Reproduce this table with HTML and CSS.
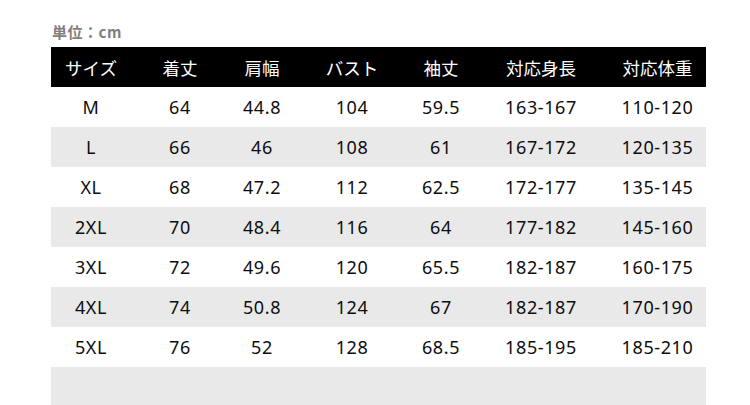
FILE: index.html
```html
<!DOCTYPE html>
<html lang="ja">
<head>
<meta charset="utf-8">
<link rel="stylesheet" href="styles.css">
</head>
<body>
<div class="page">
  <div class="unit">単位：cm</div>
  <div class="table">
    <div class="row head"><span>サイズ</span><span>着丈</span><span>肩幅</span><span>バスト</span><span>袖丈</span><span>対応身長</span><span>対応体重</span></div>
    <div class="row"><span>M</span><span>64</span><span>44.8</span><span>104</span><span>59.5</span><span>163-167</span><span>110-120</span></div>
    <div class="row alt"><span>L</span><span>66</span><span>46</span><span>108</span><span>61</span><span>167-172</span><span>120-135</span></div>
    <div class="row"><span>XL</span><span>68</span><span>47.2</span><span>112</span><span>62.5</span><span>172-177</span><span>135-145</span></div>
    <div class="row alt"><span>2XL</span><span>70</span><span>48.4</span><span>116</span><span>64</span><span>177-182</span><span>145-160</span></div>
    <div class="row"><span>3XL</span><span>72</span><span>49.6</span><span>120</span><span>65.5</span><span>182-187</span><span>160-175</span></div>
    <div class="row alt"><span>4XL</span><span>74</span><span>50.8</span><span>124</span><span>67</span><span>182-187</span><span>170-190</span></div>
    <div class="row"><span>5XL</span><span>76</span><span>52</span><span>128</span><span>68.5</span><span>185-195</span><span>185-210</span></div>
    <div class="row alt empty"></div>
  </div>
</div>
</body>
</html>
```
FILE: styles.css
```css
html, body {
  margin: 0;
  padding: 0;
  background: #ffffff;
}
.page {
  width: 750px;
  height: 405px;
  overflow: hidden;
  padding-left: 51px;
  box-sizing: border-box;
}
.unit {
  height: 47px;
  box-sizing: border-box;
  padding-top: 21px;
  padding-left: 1px;
  font-family: "Noto Sans CJK JP", "Noto Sans", sans-serif;
  font-weight: 700;
  font-size: 15px;
  line-height: 22px;
  letter-spacing: 0.5px;
  color: #7f7f7f;
}
.table {
  width: 655px;
}
.row {
  display: grid;
  grid-template-columns: 80px 98px 66px 114px 64px 136px 97px;
  height: 40px;
  align-items: center;
  text-align: center;
  font-family: "Noto Sans", "Noto Sans CJK JP", sans-serif;
  font-size: 18px;
  letter-spacing: 0.6px;
  color: #0d0d0d;
  background: #ffffff;
}
.row.alt {
  background: #e9e9e9;
}
.row.head {
  background: #000000;
  color: #ffffff;
  font-family: "Noto Sans CJK JP", sans-serif;
  font-size: 17.5px;
  letter-spacing: 0;
}
.row.empty {
  height: 40px;
}
```
